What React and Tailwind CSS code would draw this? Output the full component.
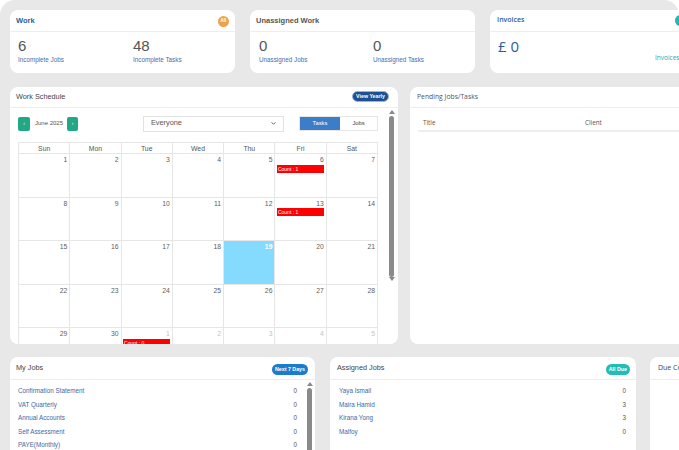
import React from "react";

const font = { fontFamily: '"Liberation Sans", Arial, sans-serif' };
const alt = { fontFamily: '"Open Sans", "Liberation Sans", sans-serif' };

const weeks = [
  [1, 2, 3, 4, 5, 6, 7],
  [8, 9, 10, 11, 12, 13, 14],
  [15, 16, 17, 18, 19, 20, 21],
  [22, 23, 24, 25, 26, 27, 28],
  [29, 30, 1, 2, 3, 4, 5],
];
const counts = { "0-5": 1, "1-5": 1, "4-2": 0 };
const days = ["Sun", "Mon", "Tue", "Wed", "Thu", "Fri", "Sat"];

const myJobs = [
  ["Confirmation Statement", 0],
  ["VAT Quarterly", 0],
  ["Annual Accounts", 0],
  ["Self Assessment", 0],
  ["PAYE(Monthly)", 0],
];
const assigned = [
  ["Yaya Ismail", 0],
  ["Maira Hamid", 3],
  ["Kirana Yong", 3],
  ["Malfoy", 0],
];

function Stat({ value, label }) {
  return (
    <div className="flex flex-col">
      <span className="text-[15px] leading-[16px] text-[#555]">{value}</span>
      <span className="text-[6.3px] leading-[10px] text-[#3f6fae] mt-[1px]">{label}</span>
    </div>
  );
}

function Scrollbar({ thumb }) {
  return (
    <div className="w-[7px] flex flex-col items-center pt-[2px]">
      <div className="w-0 h-0 border-l-[3px] border-r-[3px] border-b-[4px] border-l-transparent border-r-transparent border-b-[#888]" />
      <div className={`w-[5px] ${thumb} bg-[#8a8a8a] rounded-[3px] mt-[2px]`} />
      <div className="flex-1" />
      <div className="w-0 h-0 border-l-[3px] border-r-[3px] border-t-[4px] border-l-transparent border-r-transparent border-t-[#888] mb-[2px]" />
    </div>
  );
}

function Calendar() {
  return (
    <div className="w-[360px] mt-[11px] border-l border-t border-[#e6e6e6] grid grid-cols-7">
      {days.map((d) => (
        <div key={d} className="h-[11px] border-r border-b border-[#e6e6e6] text-center text-[6.8px] leading-[11px] text-[#555]">
          {d}
        </div>
      ))}
      {weeks.map((w, wi) =>
        w.map((n, di) => {
          const today = wi === 2 && di === 4;
          const other = wi === 4 && di > 1;
          const c = counts[`${wi}-${di}`];
          return (
            <div
              key={`${wi}-${di}`}
              className={`h-[43.5px] border-r border-b border-[#e6e6e6] ${today ? "bg-[#84dbfe]" : ""}`}
            >
              <div
                className={`text-right pr-[2px] pt-[2px] text-[6.8px] leading-[8px] ${
                  today ? "text-white font-bold" : other ? "text-[#c4c4c4]" : "text-[#606060]"
                }`}
              >
                {n}
              </div>
              {c !== undefined && (
                <div className="mx-[1.5px] mt-[0.5px] h-[8px] bg-[#ff0000] text-white text-[5px] leading-[8px] pl-[1px]">
                  Count : {c}
                </div>
              )}
            </div>
          );
        })
      )}
    </div>
  );
}

export default function App() {
  return (
    <div className="w-[679px] h-[450px] bg-white overflow-hidden" style={font}>
      <div className="w-full h-full bg-[#e8e8e8] rounded-t-[15px] pl-[10px] pt-[10px] overflow-hidden">
        {/* top stats */}
        <div className="flex gap-[15px] w-[900px]">
          <div className="w-[225px] h-[63px] bg-white rounded-[8px] shrink-0">
            <div className="h-[22px] border-b border-[#eee] flex items-center justify-between px-[6px]">
              <span className="text-[7.5px] text-[#2d5d9c] font-bold">Work</span>
              <span className="w-[11px] h-[11px] rounded-full bg-[#f0a24a] text-white text-[4.5px] font-bold flex items-center justify-center mt-[1px]">All</span>
            </div>
            <div className="flex px-[8px] pt-[6px]">
              <div className="w-[115px]"><Stat value="6" label="Incomplete Jobs" /></div>
              <Stat value="48" label="Incomplete Tasks" />
            </div>
          </div>
          <div className="w-[225px] h-[63px] bg-white rounded-[8px] shrink-0">
            <div className="h-[22px] border-b border-[#eee] flex items-center px-[6px]">
              <span className="text-[7.5px] text-[#555] font-bold">Unassigned Work</span>
            </div>
            <div className="flex px-[9px] pt-[6px]">
              <div className="w-[114px]"><Stat value="0" label="Unassigned Jobs" /></div>
              <Stat value="0" label="Unassigned Tasks" />
            </div>
          </div>
          <div className="w-[225px] h-[63px] bg-white rounded-[8px] shrink-0" style={alt}>
            <div className="h-[22px] border-b border-[#eee] flex items-center justify-between px-[7px]">
              <span className="text-[7px] text-[#2d5d9c] font-semibold">Invoices</span>
              <span className="w-[11px] h-[11px] rounded-full bg-[#26b7b0] mr-[22px]" />
            </div>
            <div className="flex justify-between px-[8px] pt-[6px]">
              <span className="text-[15px] leading-[16px] text-[#2d5d9c]">£ 0</span>
            </div>
            <div className="text-[6.5px] text-[#24aab0] pl-[165px] -mt-[1px]">Invoices</div>
          </div>
        </div>

        {/* middle row */}
        <div className="flex gap-[12px] mt-[14px] w-[900px]">
          <div className="w-[388px] h-[257px] bg-white rounded-[8px] shrink-0 flex flex-col overflow-hidden">
            <div className="h-[21px] shrink-0 border-b border-[#eee] flex items-center justify-between pl-[6px] pr-[9px]">
              <span className="text-[7.3px] text-[#444]">Work Schedule</span>
              <span className="h-[11px] px-[3px] rounded-full bg-[#1d4f91] border border-[#9bb4d6] text-white text-[5.3px] font-bold leading-[9px] -mt-[1px]">View Yearly</span>
            </div>
            <div className="flex flex-1 min-h-0">
              <div className="flex-1 pl-[8px] overflow-hidden">
                <div className="flex items-center mt-[8px] h-[15px]">
                  <div className="w-[125px] flex items-center">
                    <span className="w-[12px] h-[14px] bg-[#22a886] rounded-[2px] text-white text-[5px] flex items-center justify-center">‹</span>
                    <span className="text-[6px] text-[#555] ml-[5px] w-[32px]">June 2025</span>
                    <span className="w-[11px] h-[14px] bg-[#22a886] rounded-[2px] text-white text-[5px] flex items-center justify-center">›</span>
                  </div>
                  <div className="w-[141px] h-[16px] border border-[#e3e3e3] flex items-center justify-between px-[7px]">
                    <span className="text-[7.3px] text-[#555]">Everyone</span>
                    <svg width="5" height="3" viewBox="0 0 6 4"><path d="M0.5 0.5 L3 3 L5.5 0.5" fill="none" stroke="#555" strokeWidth="1.2" /></svg>
                  </div>
                  <div className="w-[79px] h-[15px] ml-[15px] flex border border-[#e6e6e6]">
                    <span className="w-[40px] bg-[#3b7dc6] text-white text-[5.8px] flex items-center justify-center">Tasks</span>
                    <span className="flex-1 text-[#444] text-[5.8px] flex items-center justify-center">Jobs</span>
                  </div>
                </div>
                <Calendar />
              </div>
              <div className="mr-[3px]">
                <Scrollbar thumb="h-[161px]" />
              </div>
            </div>
          </div>

          <div className="w-[300px] h-[257px] bg-white rounded-[8px] shrink-0" style={alt}>
            <div className="h-[21px] border-b border-[#eee] flex items-center px-[7px]">
              <span className="text-[6.8px] text-[#555]">Pending Jobs/Tasks</span>
            </div>
            <div className="ml-[8px] mt-[8px] h-[16px] border-b-2 border-[#eee] flex items-center text-[6.3px] text-[#555]">
              <span className="w-[167px] pl-[5px]">Title</span>
              <span>Client</span>
            </div>
          </div>
        </div>

        {/* bottom row */}
        <div className="flex mt-[13px] w-[900px]">
          <div className="w-[305px] h-[120px] bg-white rounded-[8px] shrink-0 flex flex-col">
            <div className="h-[23px] shrink-0 border-b border-[#eee] flex items-center justify-between pl-[6px] pr-[7px]">
              <span className="text-[7.3px] text-[#444]">My Jobs</span>
              <span className="h-[11px] px-[3px] rounded-full bg-[#1c7ccb] text-white text-[5.3px] font-bold leading-[11px] mt-[2px]">Next 7 Days</span>
            </div>
            <div className="flex flex-1">
              <div className="flex-1 pl-[8px] pr-[9px] pt-[4px]">
                {myJobs.map(([t, v]) => (
                  <div key={t} className="h-[13.6px] flex items-center justify-between text-[6.3px]">
                    <span className="text-[#3d69a5]">{t}</span>
                    <span className="text-[#555]">{v}</span>
                  </div>
                ))}
              </div>
              <div className="mr-[2px]">
                <Scrollbar thumb="h-[120px]" />
              </div>
            </div>
          </div>

          <div className="w-[306px] h-[120px] bg-white rounded-[8px] shrink-0 ml-[15px]">
            <div className="h-[23px] border-b border-[#eee] flex items-center justify-between pl-[7px] pr-[6px]">
              <span className="text-[7.3px] text-[#444]">Assigned Jobs</span>
              <span className="h-[11px] px-[3px] rounded-full bg-[#26bcb6] text-white text-[5.3px] font-bold leading-[11px] mt-[2px]">All Due</span>
            </div>
            <div className="pl-[9px] pr-[10px] pt-[4px]">
              {assigned.map(([t, v]) => (
                <div key={t} className="h-[13.6px] flex items-center justify-between text-[6.3px]">
                  <span className="text-[#3d69a5]">{t}</span>
                  <span className="text-[#555]">{v}</span>
                </div>
              ))}
            </div>
          </div>

          <div className="w-[225px] h-[120px] bg-white rounded-[8px] shrink-0 ml-[14px]" style={alt}>
            <div className="h-[23px] border-b border-[#eee] flex items-center px-[8px]">
              <span className="text-[7px] text-[#444]">Due Confirmation</span>
            </div>
          </div>
        </div>
      </div>
    </div>
  );
}
